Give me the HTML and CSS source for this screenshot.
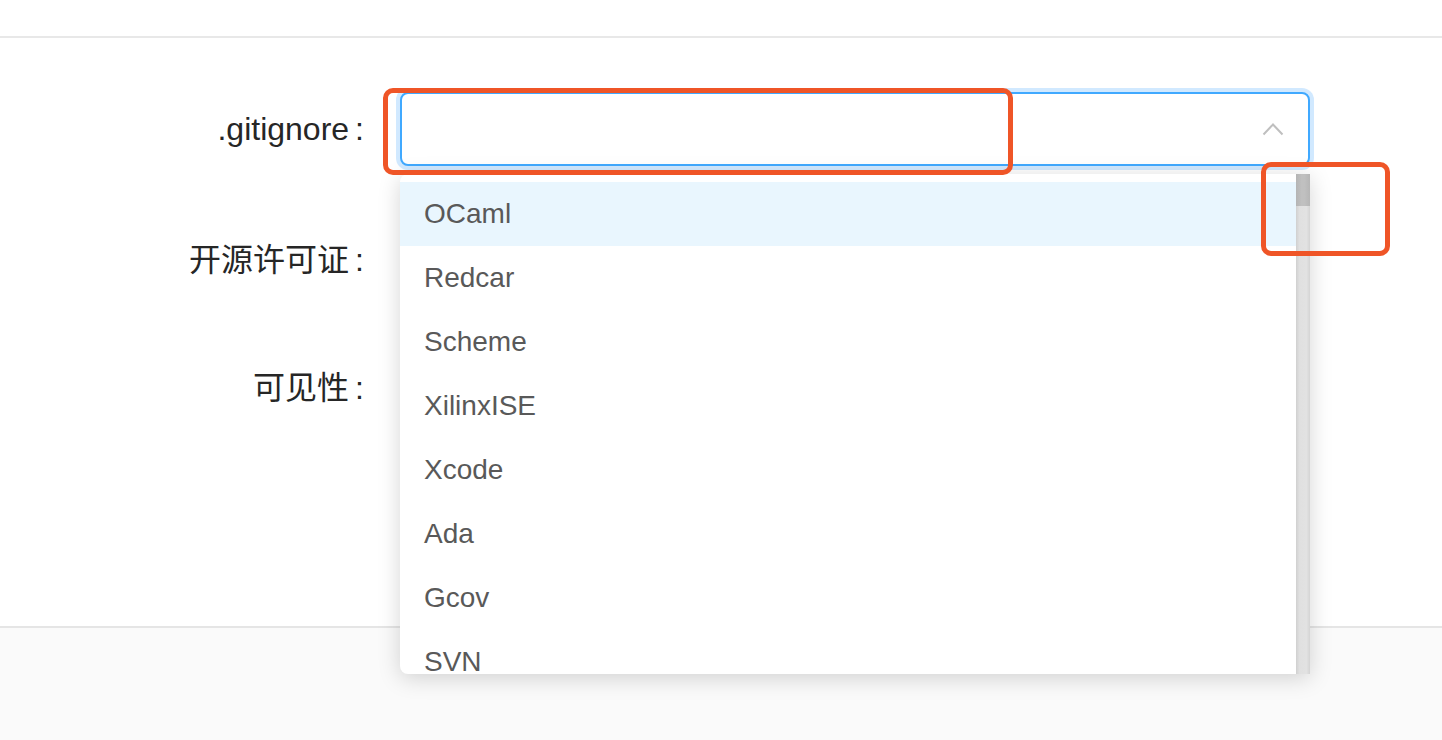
FILE: index.html
```html
<!DOCTYPE html>
<html lang="zh-CN">
<head>
  <meta charset="UTF-8" />
  <title>新建仓库</title>
  <meta name="viewport" content="width=device-width, initial-scale=1.0"/>
  <link rel="stylesheet" href="styles.css">
</head>
<body>

  <div class="page-head"></div>

  <main class="page-body">
    <form class="repo-form">
      <div class="form-row">
        <label class="form-label" for="gitignore">.gitignore</label>
        <div class="form-control">
          <div class="select select-open" id="gitignore">
            <span class="select-value"></span>
            <svg class="select-arrow" width="22" height="14" viewBox="0 0 22 14">
              <path d="M1.5 12.5 L11 2.5 L20.5 12.5" fill="none" stroke="#bfbfbf" stroke-width="2"/>
            </svg>

            <div class="dropdown">
              <ul class="dropdown-list">
                <li class="option option-active">OCaml</li>
                <li class="option">Redcar</li>
                <li class="option">Scheme</li>
                <li class="option">XilinxISE</li>
                <li class="option">Xcode</li>
                <li class="option">Ada</li>
                <li class="option">Gcov</li>
                <li class="option">SVN</li>
              </ul>
              <div class="scrollbar">
                <div class="scrollbar-thumb"></div>
              </div>
            </div>
          </div>
        </div>
      </div>

      <div class="form-row">
        <label class="form-label" for="license">开源许可证</label>
        <div class="form-control">
          <div class="select" id="license">
            <span class="select-value"></span>
          </div>
        </div>
      </div>

      <div class="form-row">
        <label class="form-label">可见性</label>
        <div class="form-control">
          <div class="select">
            <span class="select-value"></span>
          </div>
        </div>
      </div>
    </form>
  </main>

  <footer class="page-foot"></footer>

  <!-- 标注 -->
  <div class="mark mark-input"></div>
  <div class="mark mark-scroll"></div>

</body>
</html>
```

FILE: styles.css
```css
body {
  margin: 0;
  padding: 0;
  background: #fafafa;
  font-family: 'Liberation Sans', 'Noto Sans CJK SC', sans-serif;
  position: relative;
}

.page-head {
  height: 36px;
  background: #fff;
  border-bottom: 2px solid #e8e8e8;
}

.page-body {
  height: 590px;
  box-sizing: border-box;
  background: #fff;
  border-bottom: 2px solid #e5e5e5;
}

.page-foot {
  height: 112px;
  background: #fafafa;
}

/* 表单 */
.repo-form {
  padding-top: 51px;
}

.form-row {
  display: flex;
  align-items: center;
  height: 80px;
  margin-bottom: 48px;
}

.form-label {
  width: 364px;
  text-align: right;
  font-size: 32px;
  color: #262626;
}

.form-label::after {
  content: ':';
  margin-left: 6px;
}

.form-control {
  margin-left: 36px;
  width: 910px;
}

.select {
  position: relative;
  height: 74px;
  box-sizing: border-box;
  border: 2px solid #d9d9d9;
  border-radius: 8px;
  background: #fff;
}

.select-open {
  border-color: #40a9ff;
  box-shadow: 0 0 0 4px rgba(24, 144, 255, 0.2);
}

.select-arrow {
  position: absolute;
  right: 24px;
  top: 28px;
}

/* 下拉列表 */
.dropdown {
  position: absolute;
  top: calc(100% + 10px);
  left: -2px;
  right: -2px;
  height: 500px;
  display: flex;
  overflow: hidden;
  background: #fff;
  border-radius: 8px 0 0 8px;
  box-shadow: 0 4px 22px rgba(0, 0, 0, 0.17);
  z-index: 10;
}

.dropdown-list {
  flex: 1;
  margin: 0;
  padding: 8px 0;
  list-style: none;
  overflow: hidden;
}

.option {
  height: 64px;
  line-height: 64px;
  padding: 0 24px;
  font-size: 28px;
  color: #595959;
  white-space: nowrap;
}

.option-active {
  background: #e9f6fe;
}

.scrollbar {
  width: 14px;
  background: linear-gradient(to right, #d0d0d0, #e0e0e0 25%, #e2e2e2 75%, #d4d4d4);
}

.scrollbar-thumb {
  height: 32px;
  background: linear-gradient(to right, #b4b4b4, #c0c0c0 40%, #c0c0c0 60%, #b6b6b6);
}

/* 红色标注框 */
.mark {
  position: absolute;
  box-sizing: border-box;
  border: 5px solid #ef5527;
  border-radius: 10px;
  z-index: 20;
}

.mark-input {
  left: 383px;
  top: 88px;
  width: 630px;
  height: 87px;
}

.mark-scroll {
  left: 1261px;
  top: 162px;
  width: 129px;
  height: 94px;
}
```
